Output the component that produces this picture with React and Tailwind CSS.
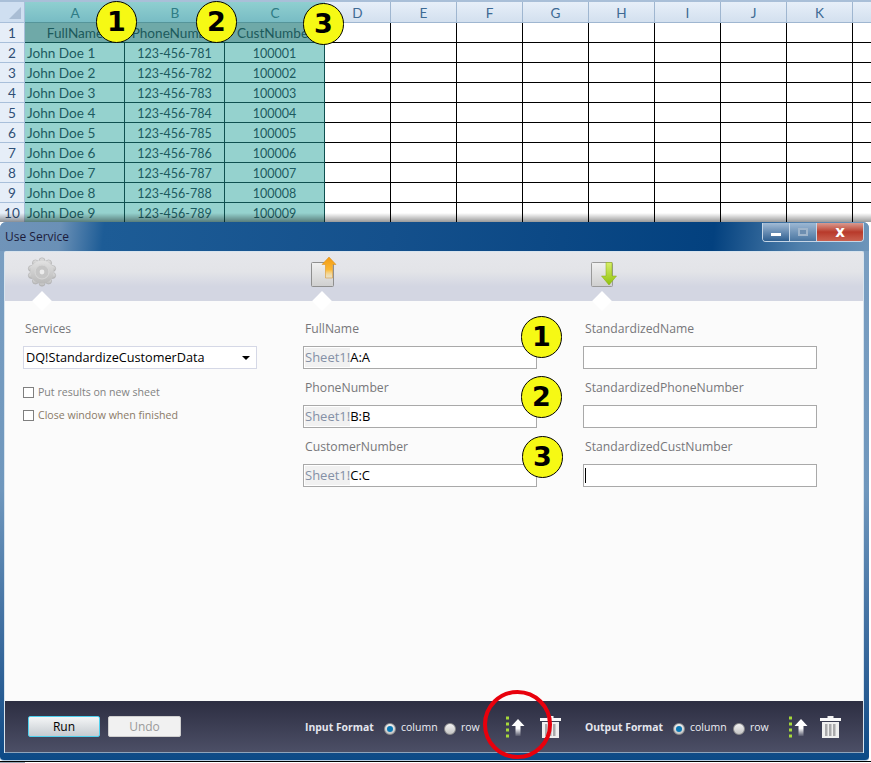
const extraCols = ["D", "E", "F", "G", "H", "I", "J", "K", ""];
const rows = [1, 2, 3, 4, 5, 6, 7, 8, 9];

const Badge = ({ n, className }) => (
    <div className={"absolute w-[41px] h-[42px] rounded-full bg-[#f6f914] border-[1.5px] border-black flex items-center justify-center font-['DejaVu_Sans',sans-serif] font-bold text-[27px] text-black " + className}>
        {n}
    </div>
);

const Gear = () => (
    <svg width="30" height="30" viewBox="0 0 30 30">
        <defs>
            <linearGradient id="gearFill" x1="0" y1="0" x2="0" y2="1">
                <stop offset="0" stopColor="#e2e2e2" />
                <stop offset="1" stopColor="#b9b9b9" />
            </linearGradient>
        </defs>
        {[0, 36, 72, 108, 144, 180, 216, 252, 288, 324].map((a) => (
            <circle key={a} cx={15 + 11.2 * Math.sin((a * Math.PI) / 180)} cy={15 - 11.2 * Math.cos((a * Math.PI) / 180)} r="3" fill="url(#gearFill)" stroke="#a9a9a9" strokeWidth="0.6" />
        ))}
        <circle cx="15" cy="15" r="11.6" fill="url(#gearFill)" />
        <circle cx="15" cy="15" r="7" fill="#c6c6c6" stroke="#d8d8d8" />
        <circle cx="15" cy="15" r="2.4" fill="#ececec" />
    </svg>
);

const DocUp = () => (
    <svg width="28" height="32" viewBox="0 0 28 32">
        <defs>
            <linearGradient id="docA" x1="0" y1="0" x2="0" y2="1">
                <stop offset="0" stopColor="#f1f1f1" />
                <stop offset="1" stopColor="#cfcfcf" />
            </linearGradient>
            <linearGradient id="upArrow" x1="0" y1="0" x2="0" y2="1">
                <stop offset="0" stopColor="#f29a12" />
                <stop offset="0.6" stopColor="#fbb731" />
                <stop offset="1" stopColor="#fde9a8" stopOpacity="0.3" />
            </linearGradient>
        </defs>
        <rect x="1.5" y="6.5" width="22" height="24" rx="1" fill="url(#docA)" stroke="#8f8f8f" />
        <path d="M19 1 L26 8.5 L22.5 8.5 L22.5 22 L15.5 22 L15.5 8.5 L12 8.5 Z" fill="url(#upArrow)" stroke="#d98a10" strokeWidth="0.5" />
    </svg>
);

const DocDown = () => (
    <svg width="28" height="28" viewBox="0 0 28 28">
        <defs>
            <linearGradient id="downArrow" x1="0" y1="0" x2="0" y2="1">
                <stop offset="0" stopColor="#d8ee6a" />
                <stop offset="1" stopColor="#90c30c" />
            </linearGradient>
        </defs>
        <rect x="1.5" y="1.5" width="21" height="24" rx="1" fill="url(#docA)" stroke="#9a9a9a" />
        <path d="M16 1.5 L22 1.5 L22 15 L26.5 15 L19 24 L11.5 15 L16 15 Z" fill="url(#downArrow)" stroke="#86a90f" strokeWidth="0.5" />
    </svg>
);

const DotArrow = () => (
    <svg width="20" height="22" viewBox="0 0 20 22">
        <defs>
            <linearGradient id="whiteFade" x1="0" y1="0" x2="0" y2="1">
                <stop offset="0" stopColor="#ffffff" />
                <stop offset="0.55" stopColor="#ffffff" />
                <stop offset="1" stopColor="#ffffff" stopOpacity="0.1" />
            </linearGradient>
        </defs>
        {[2, 8, 14, 20].map((y) => (
            <rect key={y} x="1" y={y - 1.5} width="3" height="3" fill="#a6d93a" />
        ))}
        <path d="M13 3 L19.5 10 L15.5 10 L15.5 20 L10.5 20 L10.5 10 L6.5 10 Z" fill="url(#whiteFade)" />
    </svg>
);

const Trash = () => (
    <svg width="21" height="22" viewBox="0 0 21 22">
        <rect x="7.5" y="0" width="6" height="2" fill="#f2f2f2" />
        <rect x="0" y="2" width="21" height="3" fill="#fafafa" />
        <rect x="2" y="6" width="17" height="16" fill="#efefef" />
        {[5, 9, 13].map((x) => (
            <rect key={x} x={x} y="8" width="2.5" height="12" fill="#a9a9ab" />
        ))}
    </svg>
);

const Radio = ({ on }) => (
    <div className="w-[12px] h-[12px] mt-[4px] rounded-full bg-gradient-to-b from-[#f2f2f2] to-[#c4c4c4] border border-[#8d8d8d] flex items-center justify-center shrink-0">
        {on && <div className="w-[6px] h-[6px] rounded-full bg-[#0a78b5]" />}
    </div>
);

const FormatGroup = ({ label, labelW, rowW, trashGap }) => (
    <div className="flex items-center">
        <div className={"shrink-0 text-[10.4px] font-bold text-[#e4e6ee] pt-[3px] whitespace-nowrap " + labelW}>{label}</div>
        <Radio on />
        <div className="ml-[5px] w-[43px] shrink-0 text-[10.5px] text-[#eceef4] pt-[3px]">column</div>
        <Radio />
        <div className={"ml-[5px] shrink-0 text-[10.5px] text-[#eceef4] pt-[3px] " + rowW}>row</div>
        <DotArrow />
        <div className={trashGap}>
            <Trash />
        </div>
    </div>
);

const Field = ({ label, prefix, value, caret }) => (
    <div className="mb-[9px]">
        <div className="h-[19px] leading-[19px] pl-[2px] mb-[8px] text-[12.2px] text-[#77777a]">{label}</div>
        <div className="w-[234px] h-[23px] bg-white border border-[#a9a9a9] flex items-center pl-[1px] text-[13px] text-black">
            {prefix && <span className="bg-[#f1f1f1] text-[#8490a6] h-[19px] leading-[19px]">{prefix}</span>}
            {value}
            {caret && <div className="w-[1px] h-[15px] bg-black" />}
        </div>
    </div>
);

const Check = ({ label, className }) => (
    <div className="flex items-center h-[11px] mb-[12px]">
        <div className="w-[11px] h-[11px] bg-white border border-[#7f7f7f] shrink-0" />
        <div className={"ml-[4px] text-[10.6px] whitespace-nowrap " + className}>{label}</div>
    </div>
);

const Tab = ({ children }) => (
    <div className="relative w-[280px] h-[49px]">
        <div className="absolute left-[37px] bottom-[-7px] -translate-x-1/2 w-[14px] h-[14px] rotate-45 bg-white" />
        {children}
    </div>
);

const App = () => {
    return (
        <div className="relative w-[871px] h-[763px] overflow-hidden bg-white font-['Open_Sans',sans-serif]">
            {/* sheet behind the window */}
            <div className="relative h-[222px] overflow-hidden font-['Lato',sans-serif] text-[13.6px] leading-none whitespace-nowrap">
                <div className="flex h-[23px] border-t-2 border-t-[#a9bfd8]">
                    <div className="w-[25px] shrink-0 bg-[#cfdff1] border-r border-b border-[#a8bfda] flex items-end justify-end">
                        <div className="w-0 h-0 mr-[3px] mb-[3px] border-l-[12px] border-l-transparent border-b-[12px] border-b-[#a9bdd4]" />
                    </div>
                    {["A", "B", "C"].map((c) => (
                        <div key={c} className="w-[100px] shrink-0 pt-[3px] bg-gradient-to-b from-[#8fcfd0] to-[#78bcc4] border-b border-[#55959a] flex items-center justify-center text-[#2f7c85]">
                            {c}
                        </div>
                    ))}
                    {extraCols.map((c) => (
                        <div key={c} className="w-[66px] shrink-0 pt-[3px] bg-gradient-to-b from-[#e7eff9] to-[#d3e0ef] border-r border-b border-[#9fb6d0] flex items-center justify-center text-[#3e6a94]">
                            {c}
                        </div>
                    ))}
                </div>
                <div className="flex h-[20px]">
                    <div className="w-[25px] shrink-0 pt-[3px] bg-[#e6eef8] border-r border-b border-[#a8bfda] flex items-center justify-center text-[#2f4f75]">1</div>
                    <div className="w-[100px] shrink-0 pt-[3px] bg-[#6fa9a8] border-b border-[#0f5050] flex items-center justify-center text-[#1c5a5c] overflow-hidden">FullName</div>
                    <div className="w-[100px] shrink-0 pt-[3px] bg-[#6fa9a8] border-b border-[#0f5050] flex items-center justify-center text-[#1c5a5c] overflow-hidden">PhoneNumber</div>
                    <div className="w-[100px] shrink-0 pt-[3px] bg-[#6fa9a8] border-b border-[#0f5050] flex items-center justify-center text-[#1c5a5c] overflow-hidden">CustNumber</div>
                    {extraCols.map((c) => (
                        <div key={c} className="w-[66px] shrink-0 border-r border-b border-black" />
                    ))}
                </div>
                {rows.map((r) => (
                    <div key={r} className="flex h-[20px]">
                        <div className="w-[25px] shrink-0 pt-[3px] bg-[#e6eef8] border-r border-b border-[#a8bfda] flex items-center justify-center text-[#2f4f75]">{r + 1}</div>
                        <div className="w-[100px] shrink-0 pt-[3px] bg-[#95d2ce] border-r border-b border-[#0f5050] flex items-center pl-[2px] text-[#1c5a5f]">John Doe {r}</div>
                        <div className="w-[100px] shrink-0 pt-[3px] bg-[#95d2ce] border-r border-b border-[#0f5050] flex items-center justify-center text-[12.5px] text-[#1c5a5f]">123-456-78{r}</div>
                        <div className="w-[100px] shrink-0 pt-[3px] bg-[#95d2ce] border-r border-b border-[#0f5050] flex items-center justify-center text-[12.5px] text-[#1c5a5f]">10000{r}</div>
                        {extraCols.map((c) => (
                            <div key={c} className="w-[66px] shrink-0 border-r border-b border-black" />
                        ))}
                    </div>
                ))}
                <div className="absolute left-0 right-0 bottom-0 h-[9px] bg-gradient-to-b from-transparent to-[#00000066]" />
            </div>

            {/* dialog */}
            <div className="flex h-[539px]">
                <div className="w-[869px] h-[539px] rounded-t-[6px] rounded-b-[4px] border-b border-[#b9d0e4] overflow-hidden flex flex-col bg-gradient-to-b from-[#7b9fc2] via-[#6f97bd] to-[#0c4a86]">
                    <div className="relative h-[29px] shrink-0 flex items-start bg-[linear-gradient(96deg,#7094b9_0%,#6a90b6_7%,#1d5c96_12%,#14508c_45%,#03417f_82%,#4f7fab_92%,#6d95ba_100%)]">
                        <div className="pl-[5px] pt-[7px] text-[12px] leading-[16px] text-[#1c1c3c]">Use Service</div>
                        <div className="ml-auto mr-[5px] mt-[1px] flex h-[19px] rounded-b-[4px] border border-t-0 border-[#c6d6e6] overflow-hidden">
                            <div className="w-[27px] border-r border-[#c6d6e6] bg-gradient-to-b from-[#a3bcd6] to-[#2e5f90] flex items-center justify-center">
                                <div className="w-[10px] h-[3px] mt-[4px] bg-white" />
                            </div>
                            <div className="w-[27px] border-r border-[#c6d6e6] bg-gradient-to-b from-[#9db8d3] to-[#4a76a1] flex items-center justify-center">
                                <div className="w-[10px] h-[8px] border-2 border-[#9fb5cb] bg-[#6d8eb0]" />
                            </div>
                            <div className="w-[46px] bg-gradient-to-b from-[#d89a90] via-[#b8392a] to-[#c9604f] flex items-center justify-center text-white font-bold text-[15px] leading-none font-['DejaVu_Sans',sans-serif]">
                                x
                            </div>
                        </div>
                    </div>

                    <div className="mx-[4px] w-[860px] h-[502px] border-t border-l border-r border-[#d8e4ee] flex flex-col rounded-t-[2px]">
                        <div className="h-[49px] shrink-0 flex bg-[linear-gradient(180deg,#e6e7eb_0%,#e3e4e8_40%,#d3d6e2_70%,#d3d6e2_100%)]">
                            <Tab>
                                <div className="pl-[22px] pt-[5px]"><Gear /></div>
                            </Tab>
                            <Tab>
                                <div className="pl-[25px] pt-[4px]"><DocUp /></div>
                            </Tab>
                            <Tab>
                                <div className="pl-[25px] pt-[9px]"><DocDown /></div>
                            </Tab>
                        </div>

                        <div className="h-[400px] shrink-0 flex pl-[18px] pt-[18px] bg-[#fbfbfb]">
                            <div className="w-[280px]">
                                <div className="h-[19px] leading-[19px] pl-[2px] mb-[8px] text-[12.2px] text-[#77777a]">Services</div>
                                <div className="relative w-[234px] h-[23px] bg-white border border-[#d5d8e6] flex items-center pl-[2px] text-[12.7px] text-black mb-[18px]">
                                    DQ!StandardizeCustomerData
                                    <div className="absolute right-[6px] top-[9px] w-0 h-0 border-l-[4px] border-r-[4px] border-t-[4px] border-l-transparent border-r-transparent border-t-black" />
                                </div>
                                <Check label="Put results on new sheet" className="text-[#828282]" />
                                <Check label="Close window when finished" className="text-[#8a7a68]" />
                            </div>
                            <div className="w-[280px]">
                                <Field label="FullName" prefix="Sheet1!" value="A:A" />
                                <Field label="PhoneNumber" prefix="Sheet1!" value="B:B" />
                                <Field label="CustomerNumber" prefix="Sheet1!" value="C:C" />
                            </div>
                            <div className="w-[280px]">
                                <Field label="StandardizedName" />
                                <Field label="StandardizedPhoneNumber" />
                                <Field label="StandardizedCustNumber" caret />
                            </div>
                        </div>

                        <div className="h-[52px] shrink-0 flex items-center pl-[23px] bg-gradient-to-b from-[#2d2e42] to-[#4c4f66] border-b border-[#8fa4bb]">
                            <div className="w-[72px] h-[21px] shrink-0 rounded-[2px] bg-gradient-to-b from-[#f4f6f7] to-[#c5cbd0] border border-[#4fd0ee] flex items-center justify-center text-[12px] text-black">Run</div>
                            <div className="ml-[8px] w-[73px] h-[21px] shrink-0 rounded-[2px] bg-[#f1f1f1] border border-[#cfcfcf] flex items-center justify-center text-[12px] text-[#9a9a9a]">Undo</div>
                            <div className="ml-[124px]">
                                <FormatGroup label="Input Format" labelW="w-[79px]" rowW="w-[44px]" trashGap="ml-[15px]" />
                            </div>
                            <div className="ml-[24px]">
                                <FormatGroup label="Output Format" labelW="w-[88px]" rowW="w-[38px]" trashGap="ml-[12px]" />
                            </div>
                        </div>
                    </div>
                </div>
                <div className="w-[2px] bg-white" />
            </div>
            <div className="h-[2px] flex border-t border-black">
                <div className="w-[25px] bg-[#9aa7b5]" />
            </div>

            {/* annotations drawn over the shot */}
            <Badge n="1" className="left-[96px] top-[1px]" />
            <Badge n="2" className="left-[196px] top-[1px]" />
            <Badge n="3" className="left-[303px] top-[3px]" />
            <Badge n="1" className="left-[521px] top-[316px]" />
            <Badge n="2" className="left-[521px] top-[376px]" />
            <Badge n="3" className="left-[522px] top-[436px]" />
            <div className="absolute left-[483px] top-[690px] w-[69px] h-[69px] rounded-full border-[4px] border-[#e8000c]" />
        </div>
    );
};

export default App;
